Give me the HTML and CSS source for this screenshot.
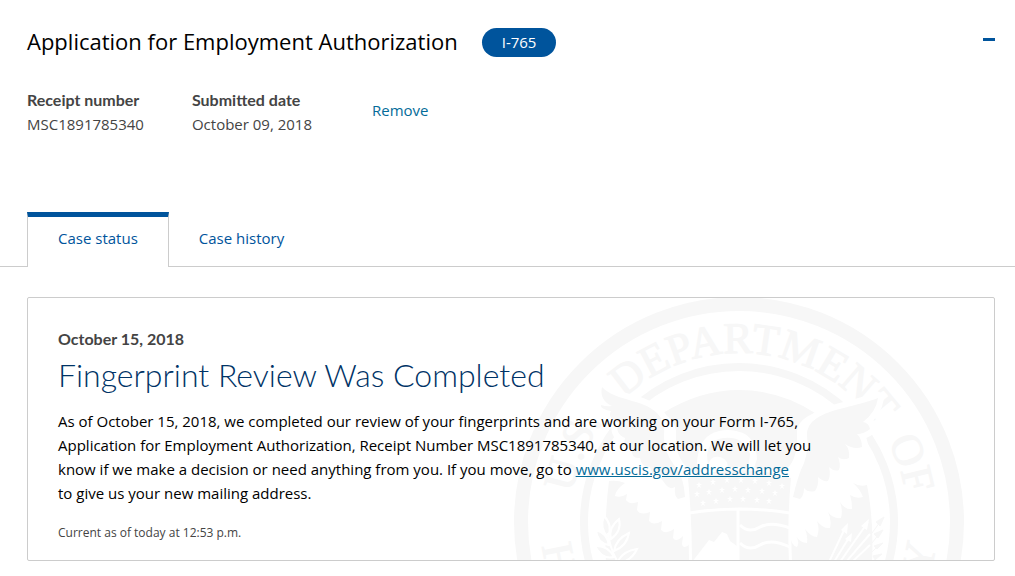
FILE: index.html
```html
<!DOCTYPE html>
<html lang="en">
<head>
<meta charset="utf-8">
<meta name="viewport" content="width=device-width, initial-scale=1">
<title>Application for Employment Authorization</title>
<link rel="stylesheet" href="styles.css">
</head>
<body>
<main>
  <header class="case-header">
    <h1 class="case-title">Application for Employment Authorization</h1>
    <span class="form-badge">I-765</span>
    <button class="collapse" type="button" aria-label="Collapse case" aria-expanded="true"><span class="collapse-bar"></span></button>
  </header>

  <div class="case-meta">
    <dl class="meta-item">
      <dt>Receipt number</dt>
      <dd>MSC1891785340</dd>
    </dl>
    <dl class="meta-item">
      <dt>Submitted date</dt>
      <dd>October 09, 2018</dd>
    </dl>
    <a class="remove" href="#remove">Remove</a>
  </div>

  <div class="tabs" role="tablist">
    <button class="tab tab-active" type="button" role="tab" aria-selected="true" aria-controls="status" id="status-tab">Case status</button>
    <button class="tab" type="button" role="tab" aria-selected="false">Case history</button>
  </div>

  <section class="card" id="status" role="tabpanel" aria-labelledby="status-tab">
    <svg class="seal" viewBox="514 298 450 262" aria-hidden="true">
      <defs>
        <path id="rim" d="M739 691A169 169 0 1 1 739.1 691"/>
        <path id="rim-low" d="M541 522A198 198 0 0 0 937 522"/>
        <path id="star" d="M0-3L1-1H3L1 .5 2 3 0 1.500-2 3-1 .5-3-1H-1Z"/>
      </defs>
      <g fill="none" stroke="#f7f7f7">
        <circle cx="739" cy="522" r="218" stroke-width="14"/>
        <circle cx="739" cy="522" r="155" stroke-width="8"/>
      </g>
      <g class="seal-text">
        <text><textPath href="#rim" startOffset="294">U.S.</textPath></text>
        <text><textPath href="#rim" startOffset="404">DEPARTMENT</textPath></text>
        <text><textPath href="#rim" startOffset="712">OF</textPath></text>
        <text><textPath href="#rim-low" startOffset="24">H</textPath></text>
        <text text-anchor="end"><textPath href="#rim-low" startOffset="599">Y</textPath></text>
      </g>
      <!-- upper field -->
      <path fill="#f7f7f7" d="M663 413Q700 390 739 390Q780 390 815 413Q799 419 797 430V447Q792 474 773 474H705Q683 474 676 447V430Q674 420 663 413Z"/>
      <!-- wings -->
      <g fill="#f7f7f7" stroke="#fff" stroke-width="12" paint-order="stroke" stroke-linejoin="round">
        <path d="M878 398C858 406 830 409 817 418Q806 425 807 436Q809 449 804 463Q798 475 793 497L800 499Q804 496 804 488Q808 493 815 491Q819 485 818 477Q823 482 828 481Q831 475 829 467Q834 472 839 470Q841 464 838 457Q843 461 849 458Q850 449 845 444Q854 450 862 447Q862 439 857 434Q864 434 870 429Q869 423 863 422Q876 412 878 398Z"/>
        <path d="M602 387C615 401 643 399 657 413Q666 422 664 436Q663 450 674 465Q684 476 685 497L678 499Q674 496 675 487Q670 490 666 485L660 477Q652 477 650 467Q642 468 640 458Q631 459 632 449Q622 446 625 438Q614 433 619 423Q607 418 611 411Q600 409 601 405Q607 407 612 406Q599 400 602 387Z"/>
      </g>
      <!-- head -->
      <path fill="#fff" d="M697 470Q696 443 711 434Q727 426 745 434Q756 441 757 459L752 474H719Z"/>
      <path fill="#f7f7f7" d="M707 455Q709 439 724 438Q744 436 750 454L748 471H727Q730 460 720 457Q710 455 708 466Z"/>
      <circle cx="726" cy="447" r="3" fill="#fff"/>
      <!-- lower feathered fields -->
      <g fill="#f7f7f7">
        <path d="M853 483Q860 487 867 485Q874 520 872 562H790V534Q791 546 797 547Q800 542 796 536Q800 543 807 543Q808 536 805 529Q811 537 817 537Q820 529 817 521Q823 529 830 528Q832 520 828 512Q833 519 841 518Q843 510 840 502Q845 510 852 509Q852 501 850 495Q856 499 863 497Q860 489 853 483Z"/>
        <path d="M625 483Q618 480 609 481Q604 520 606 562H690V544Q683 550 682 544L683 536Q676 543 673 538L674 529Q666 535 661 530L662 521Q653 526 649 521L650 512Q640 516 637 510L638 502Q629 505 626 500L627 494Q621 498 615 496Q616 489 625 483Z"/>
      </g>
      <!-- shield -->
      <path fill="#f7f7f7" stroke="#fff" stroke-width="6" paint-order="stroke" d="M688 478Q739 462 791 478Q787 520 789 562H692Q692 520 688 478Z"/>
      <g fill="none" stroke="#fff" stroke-width="3">
        <path d="M689 513Q739 505 790 513M738 509V562"/>
        <path d="M740 525Q749 534 760 527Q771 521 790 528M740 543Q749 552 760 545Q771 538 790 547"/>
      </g>
      <path fill="#fff" d="M692 562L709 540 714 542 722 532 727 534 730 541 737 546V562Z"/>
      <g fill="#fff">
        <use href="#star" x="699" y="485"/><use href="#star" x="713" y="482"/><use href="#star" x="727" y="480"/><use href="#star" x="741" y="480"/><use href="#star" x="755" y="481"/><use href="#star" x="769" y="483"/><use href="#star" x="782" y="486"/>
        <use href="#star" x="697" y="494"/><use href="#star" x="709" y="492"/><use href="#star" x="722" y="490"/><use href="#star" x="735" y="489"/><use href="#star" x="748" y="490"/><use href="#star" x="762" y="491"/><use href="#star" x="775" y="493"/>
        <use href="#star" x="703" y="503"/><use href="#star" x="716" y="501"/><use href="#star" x="730" y="499"/><use href="#star" x="743" y="499"/><use href="#star" x="757" y="500"/><use href="#star" x="769" y="501"/>
      </g>
      <!-- olive branch -->
      <g fill="#f7f7f7" stroke="#fff" stroke-width="2">
        <path d="M604 516Q613 525 608 537Q599 529 604 516Z"/>
        <path d="M619 519Q622 531 611 539Q608 528 619 519Z"/>
        <path d="M596 530Q607 533 609 545Q597 543 596 530Z"/>
        <path d="M629 533Q627 546 614 551Q616 539 629 533Z"/>
        <path d="M595 546Q608 545 614 557Q602 560 595 546Z"/>
        <path d="M637 549Q631 562 617 563Q622 551 637 549Z"/>
        <path fill="none" d="M608 533Q610 550 620 566"/>
      </g>
      <!-- arrows -->
      <g fill="none" stroke="#fff" stroke-width="2">
        <path d="M829 562L846 526M834 562L850 536M840 562L868 522M846 562L870 534M852 562L870 545"/>
      </g>
      <g fill="#fff">
        <path d="M848 523L847 534 841 530ZM852 533L851 542 845 539ZM869 519L867 530 861 526Z"/>
      </g>
      <g fill="#f7f7f7" stroke="#f7f7f7">
        <path d="M884 517L880 526 876 522ZM883 530L878 538 874 534ZM883 543L877 549 874 546ZM882 554L875 560 873 556Z"/>
        <path fill="none" d="M880 522L872 533M879 534L872 543M878 546L872 552"/>
      </g>
    </svg>
    <div class="card-body">
      <p class="status-date">October 15, 2018</p>
      <h2 class="status-title">Fingerprint Review Was Completed</h2>
      <p class="status-text">As of October 15, 2018, we completed our review of your fingerprints and are working on your Form I-765, Application for Employment Authorization, Receipt Number MSC1891785340, at our location. We will let you know if we make a decision or need anything from you. If you move, go to <a href="#addresschange">www.uscis.gov/addresschange</a> to&nbsp;give us your new mailing address.</p>
      <p class="status-current">Current as of today at 12:53 p.m.</p>
    </div>
  </section>
</main>
</body>
</html>
```
FILE: styles.css
```css
* {
  box-sizing: border-box;
}

body {
  margin: 0;
  background: #fff;
  color: #000;
  font: 400 15px/24px "Open Sans", sans-serif;
}

h1, h2, p, dl, dd {
  margin: 0;
}

a {
  color: #046b99;
}

button {
  border: 0;
  background: none;
  font: inherit;
  cursor: pointer;
}

.case-header {
  display: flex;
  align-items: center;
  gap: 24px;
  padding: 26px 20px 0 27px;
}

.case-title {
  padding-bottom: 2px;
  font-size: 22px;
  font-weight: 400;
  line-height: 30px;
}

.form-badge {
  padding: 2px 20px 3px;
  border-radius: 15px;
  background: #00549c;
  color: #fff;
}

.collapse {
  margin-left: auto;
  padding: 8px 0 14px;
}

.collapse-bar {
  display: block;
  width: 12px;
  height: 3px;
  background: #00549c;
}

.case-meta {
  display: flex;
  align-items: center;
  gap: 48px;
  padding: 30px 27px 0;
  color: #444;
}

.meta-item dt,
.status-date {
  color: #444;
  font: 700 16px/24px Lato, sans-serif;
}

.remove {
  margin: 0 0 4px 12px;
  text-decoration: none;
}

.tabs {
  display: flex;
  align-items: flex-end;
  margin-top: 76px;
  padding-left: 27px;
  border-bottom: 1px solid #ccc;
}

.tab {
  padding: 9px 30px 16px;
  color: #00549c;
}

.tab-active {
  margin-bottom: -1px;
  padding-bottom: 17px;
  border: solid #ccc;
  border-width: 5px 1px 0;
  border-top-color: #00549c;
  background: #fff;
}

.card {
  position: relative;
  margin: 30px 20px 15px 27px;
  overflow: hidden;
  border: 1px solid #ccc;
  border-radius: 2px;
}

.seal {
  position: absolute;
  top: 0;
  right: 30px;
  width: 450px;
  height: 262px;
}

.seal-text {
  fill: #f7f7f7;
  stroke: #f7f7f7;
  font: 400 44px "Liberation Serif", serif;
}

.card-body {
  position: relative;
  max-width: 814px;
  padding: 29px 30px 15px;
}

.status-title {
  margin-top: 4px;
  color: #003366;
  font: 300 32px/40px Lato, sans-serif;
}

.status-text {
  margin-top: 14px;
}

.status-current {
  margin-top: 16px;
  color: #444;
  font-size: 12px;
}
```
